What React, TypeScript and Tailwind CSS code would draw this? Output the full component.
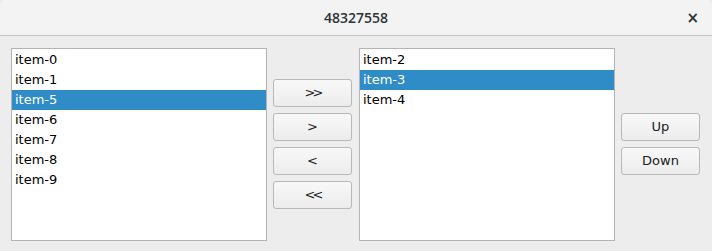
import React from "react";

const Btn = ({ label, className = "" }: { label: string; className?: string }) => (
  <div
    className={`flex h-[28px] w-[79px] items-center justify-center rounded-[3px] border border-[#b8b8b8] bg-gradient-to-b from-[#f8f8f8] to-[#ececec] text-[13px] text-[#202020] ${className}`}
  >
    {label}
  </div>
);

const List = ({ items, selected }: { items: string[]; selected: string }) => (
  <div className="flex h-[193px] w-[256px] flex-col border border-[#b4b4b4] bg-white pt-[1px]">
    {items.map((it) => (
      <div
        key={it}
        className={`h-[20px] pl-[3px] text-[13px] leading-[20px] ${
          it === selected ? "bg-[#308cc6] text-white" : "text-black"
        }`}
      >
        {it}
      </div>
    ))}
  </div>
);

export default function App() {
  return (
    <div
      className="h-[251px] w-[712px] overflow-hidden bg-[#ededed]"
      style={{ fontFamily: '"DejaVu Sans", sans-serif' }}
    >
      <div className="relative flex h-[36px] items-center justify-center rounded-t-[6px] border-b border-[#c4c4c4] bg-[#f3f3f3]">
        <span className="font-['Open_Sans',sans-serif] text-[14px] font-semibold text-[#2e3436]">48327558</span>
        <span className="absolute right-[13px] top-[9px] text-[15px] font-bold leading-[18px] text-[#2e3436]">×</span>
      </div>
      <div className="flex pl-[11px] pt-[12px]">
        <List items={["item-0", "item-1", "item-5", "item-6", "item-7", "item-8", "item-9"]} selected="item-5" />
        <div className="ml-[6px] flex flex-col gap-[6px] pt-[31px]">
          <Btn label=">>" className="tracking-[-3px]" />
          <Btn label=">" />
          <Btn label="<" />
          <Btn label="<<" className="tracking-[-3px]" />
        </div>
        <div className="ml-[7px]">
          <List items={["item-2", "item-3", "item-4"]} selected="item-3" />
        </div>
        <div className="ml-[6px] flex flex-col gap-[6px] pt-[65px]">
          <Btn label="Up" />
          <Btn label="Down" />
        </div>
      </div>
    </div>
  );
}
